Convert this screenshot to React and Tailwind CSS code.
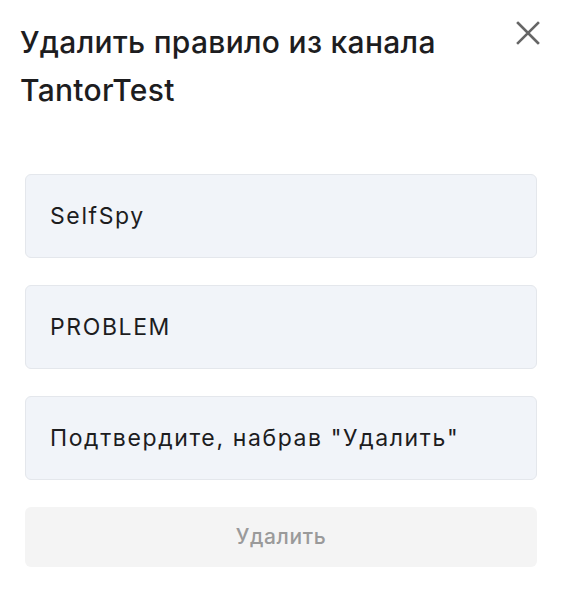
import { useState } from "react";

function App() {
  const [confirm, setConfirm] = useState("");

  return (
    <div className="w-[562px] h-[590px] bg-white relative" style={{ fontFamily: "Inter, 'Noto Sans', sans-serif" }}>
      <button className="absolute right-[22px] top-[21px] text-[#666666]">
        <svg width="24" height="24" viewBox="0 0 24 24" fill="none" stroke="currentColor" strokeWidth="2.6" strokeLinecap="square">
          <path d="M2 2 L22 22 M22 2 L2 22" />
        </svg>
      </button>

      <div className="pl-5 pr-16 pt-[18px]">
        <h2 className="text-[30px] leading-[48px] font-medium tracking-[0.01em] text-[#1d1d1f]">
          Удалить правило из канала TantorTest
        </h2>
      </div>

      <div className="flex flex-col gap-[27px] px-[25px] mt-[60px]">
        <input
          type="text"
          value="SelfSpy"
          readOnly
          className="h-[84px] w-full px-6 rounded-md bg-[#f1f4f9] border border-[#e4e7ec] text-[23px] tracking-[0.07em] text-[#1d1d1f] outline-none"
        />
        <input
          type="text"
          value="PROBLEM"
          readOnly
          className="h-[84px] w-full px-6 rounded-md bg-[#f1f4f9] border border-[#e4e7ec] text-[23px] tracking-[0.07em] text-[#1d1d1f] outline-none"
        />
        <input
          type="text"
          placeholder={'Подтвердите, набрав "Удалить"'}
          value={confirm}
          onChange={(e) => setConfirm(e.target.value)}
          className="h-[84px] w-full px-6 rounded-md bg-[#f1f4f9] border border-[#e4e7ec] text-[23px] tracking-[0.07em] text-[#1d1d1f] placeholder:text-[#1d1d1f] outline-none"
        />
        <button
          disabled={confirm !== "Удалить"}
          className="h-[60px] w-full rounded-md bg-[#f4f4f4] text-[21px] font-medium tracking-[0.03em] text-[#9a9a9a]"
        >
          Удалить
        </button>
      </div>
    </div>
  );
}

export default App;
